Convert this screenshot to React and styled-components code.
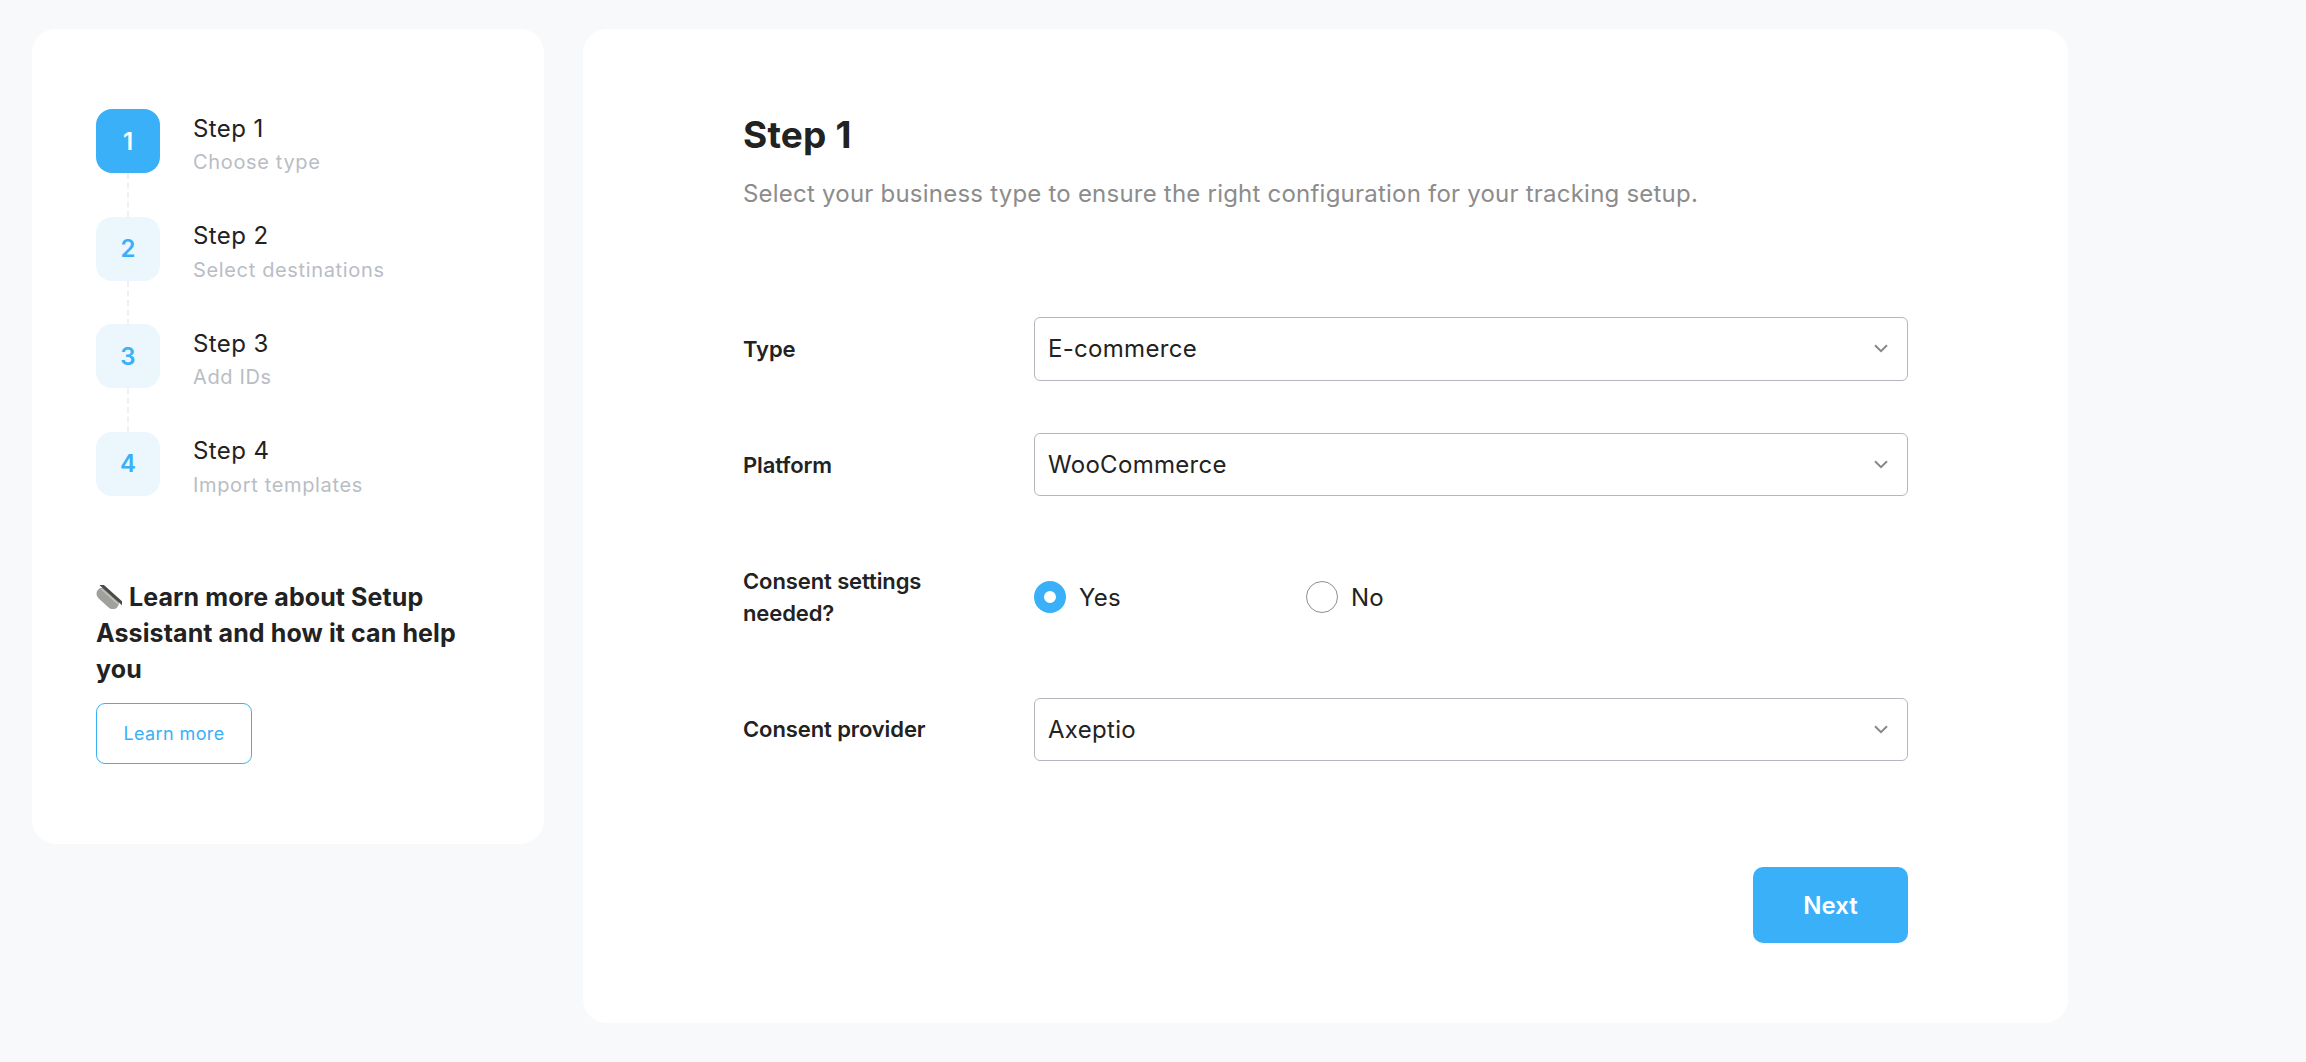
import React from 'react';
import styled, { createGlobalStyle } from 'styled-components';

const GlobalStyle = createGlobalStyle`
  html, body {
    margin: 0;
    padding: 0;
    background: #f8f9fb;
  }
  body {
    font-family: Inter, "Liberation Sans", sans-serif;
    color: #222;
  }
  * {
    box-sizing: border-box;
  }
`;

const Page = styled.div`
  display: flex;
  align-items: flex-start;
  gap: 39px;
  padding: 29px 32px;
`;

const Sidebar = styled.aside`
  width: 512px;
  padding: 80px 64px;
  background: #fff;
  border-radius: 24px;
`;

const StepList = styled.ol`
  display: flex;
  flex-direction: column;
  gap: 43.5px;
  margin: 0;
  padding: 0;
  list-style: none;
`;

const StepRow = styled.li`
  display: flex;
  align-items: center;
  gap: 33px;
  height: 64px;
`;

const Badge = styled.span`
  position: relative;
  display: flex;
  align-items: center;
  justify-content: center;
  flex: none;
  width: 64px;
  height: 64px;
  border-radius: 16px;
  font-size: 24px;
  font-weight: 600;
  background: ${(p) => (p.$active ? '#3ab0f8' : '#ebf6fd')};
  color: ${(p) => (p.$active ? '#fff' : '#3ab0f8')};

  &::after {
    content: '';
    display: ${(p) => (p.$last ? 'none' : 'block')};
    position: absolute;
    top: 64px;
    left: 31px;
    height: 44px;
    border-left: 2px dashed #eef0f4;
  }
`;

const StepText = styled.div`
  display: flex;
  flex-direction: column;
  gap: 6.5px;
  padding-top: 5.5px;
`;

const StepTitle = styled.span`
  font-size: 24px;
  line-height: 30px;
  letter-spacing: 0.4px;
  color: #222;
`;

const StepHint = styled.span`
  font-size: 20px;
  line-height: 24px;
  letter-spacing: 0.65px;
  color: #b9bdc4;
`;

const Promo = styled.div`
  margin-top: 83.9px;
`;

const PromoTitle = styled.h4`
  margin: 0;
  font-size: 25px;
  line-height: 36px;
  font-weight: 700;
  letter-spacing: 0.1px;
  color: #222;

  svg {
    vertical-align: -3px;
    margin-right: 7px;
  }
`;

const OutlineButton = styled.button`
  display: block;
  width: 156px;
  height: 61px;
  margin-top: 16px;
  background: #fff;
  border: 1.5px solid #3ab0f8;
  border-radius: 9px;
  font-family: inherit;
  font-size: 18px;
  letter-spacing: 0.4px;
  color: #3ab0f8;
`;

const Main = styled.main`
  width: 1485px;
  height: 994px;
  padding: 84px 160px 0 160px;
  background: #fff;
  border-radius: 24px;
`;

const Title = styled.h2`
  margin: 0;
  font-size: 37px;
  line-height: 44px;
  font-weight: 700;
  letter-spacing: 0.2px;
  color: #222;
`;

const Subtitle = styled.p`
  margin: 21px 0 0;
  font-size: 24px;
  line-height: 32px;
  letter-spacing: 0.22px;
  color: #8c8c8c;
`;

const Form = styled.form`
  display: flex;
  flex-direction: column;
  gap: 52.4px;
  margin-top: 107px;
`;

const Row = styled.div`
  display: grid;
  grid-template-columns: 291px 1fr;
  align-items: center;
  min-height: ${(p) => (p.$tall ? '96.5px' : '63.5px')};
`;

const Label = styled.label`
  width: 230px;
  font-size: 22px;
  line-height: 32px;
  font-weight: 600;
  letter-spacing: -0.1px;
  color: #222;
`;

const Select = styled.div`
  display: flex;
  align-items: center;
  justify-content: space-between;
  height: 63.5px;
  padding: 0 19px 0 13px;
  border: 1.5px solid #b4b8be;
  border-radius: 6px;
  font-size: 24px;
  letter-spacing: 0.3px;
  color: #222;

  svg {
    color: #888;
  }
`;

const RadioGroup = styled.div`
  display: grid;
  grid-template-columns: 272px auto;
`;

const RadioOption = styled.div`
  display: flex;
  align-items: center;
  gap: 13px;
  font-size: 24px;
  letter-spacing: 0.22px;
  color: #222;
`;

const RadioMark = styled.span`
  display: block;
  width: 32px;
  height: 32px;
  border-radius: 50%;
  background: #fff;
  border: ${(p) => (p.$checked ? '10px solid #3ab0f8' : '1px solid #8f8f8f')};
`;

const Actions = styled.div`
  display: flex;
  justify-content: flex-end;
  margin-top: 106px;
`;

const NextButton = styled.button`
  width: 155px;
  height: 76px;
  border: none;
  border-radius: 10px;
  background: #3ab0f8;
  font-family: inherit;
  font-size: 24px;
  font-weight: 600;
  color: #fff;
`;

const Chevron = () => (
  <svg width="14" height="9" viewBox="0 0 14 9" fill="none">
    <path d="M1 1.2l6 6 6-6" stroke="currentColor" strokeWidth="2" />
  </svg>
);

const HotDog = () => (
  <svg width="26" height="24" viewBox="0 0 26 24">
    <g transform="rotate(42 13 12)">
      <rect x="0" y="8" width="26" height="12" rx="6" fill="#a0a09c" />
      <rect x="-3" y="6.5" width="32" height="3" rx="1.5" fill="#4c4a48" />
      <rect x="2" y="10.5" width="22" height="1.2" rx="0.6" fill="#c8c8c4" />
    </g>
  </svg>
);

const steps = [
  { n: 1, title: 'Step 1', hint: 'Choose type' },
  { n: 2, title: 'Step 2', hint: 'Select destinations' },
  { n: 3, title: 'Step 3', hint: 'Add IDs' },
  { n: 4, title: 'Step 4', hint: 'Import templates' },
];

const App = () => {
  return (
    <Page>
      <GlobalStyle />
      <Sidebar>
        <StepList>
          {steps.map((s, i) => (
            <StepRow key={s.n}>
              <Badge $active={i === 0} $last={i === steps.length - 1}>{s.n}</Badge>
              <StepText>
                <StepTitle>{s.title}</StepTitle>
                <StepHint>{s.hint}</StepHint>
              </StepText>
            </StepRow>
          ))}
        </StepList>
        <Promo>
          <PromoTitle><HotDog />Learn more about Setup Assistant and how it can help you</PromoTitle>
          <OutlineButton type="button">Learn more</OutlineButton>
        </Promo>
      </Sidebar>
      <Main>
        <Title>Step 1</Title>
        <Subtitle>Select your business type to ensure the right configuration for your tracking setup.</Subtitle>
        <Form>
          <Row>
            <Label>Type</Label>
            <Select>E-commerce<Chevron /></Select>
          </Row>
          <Row>
            <Label>Platform</Label>
            <Select>WooCommerce<Chevron /></Select>
          </Row>
          <Row $tall>
            <Label>Consent settings needed?</Label>
            <RadioGroup>
              <RadioOption><RadioMark $checked />Yes</RadioOption>
              <RadioOption><RadioMark />No</RadioOption>
            </RadioGroup>
          </Row>
          <Row>
            <Label>Consent provider</Label>
            <Select>Axeptio<Chevron /></Select>
          </Row>
        </Form>
        <Actions>
          <NextButton type="button">Next</NextButton>
        </Actions>
      </Main>
    </Page>
  );
};

export default App;
